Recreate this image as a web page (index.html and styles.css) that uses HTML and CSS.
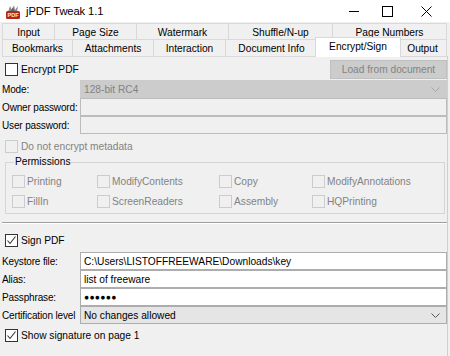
FILE: index.html
```html
<!DOCTYPE html>
<html>
<head>
<meta charset="utf-8">
<link rel="stylesheet" href="styles.css">
</head>
<body>
<div class="window">
  <div class="titlebar">
    <svg class="appicon" width="16" height="16" viewBox="0 0 16 16">
      <path d="M3 8 L5 2 L7 6 L9 1 L10 6 L13 2 L12 8 Z" fill="#8a8a8a"/>
      <path d="M6 7 L8 3 L9 7 Z" fill="#5a5a5a"/>
      <rect x="1" y="7" width="14" height="8" rx="1.5" fill="#b3261e"/>
      <text x="8" y="13.4" font-size="5.6" font-family="Liberation Sans, sans-serif" font-weight="bold" fill="#ffe9d0" text-anchor="middle">PDF</text>
    </svg>
    <span class="title">jPDF Tweak 1.1</span>
    <div class="controls">
      <svg class="ctl" width="46" height="22" viewBox="0 0 46 22"><path d="M18 11.5 H28" stroke="#000" stroke-width="1"/></svg>
      <svg class="ctl" width="46" height="22" viewBox="0 0 46 22"><rect x="18.5" y="6.5" width="10" height="10" fill="none" stroke="#000" stroke-width="1"/></svg>
      <svg class="ctl" width="46" height="22" viewBox="0 0 46 22"><path d="M17.5 6.5 L27.5 16.5 M27.5 6.5 L17.5 16.5" stroke="#000" stroke-width="1"/></svg>
    </div>
  </div>

  <div class="tabs">
    <div class="tabrow row1">
      <div class="tab">Input</div>
      <div class="tab">Page Size</div>
      <div class="tab">Watermark</div>
      <div class="tab">Shuffle/N-up</div>
      <div class="tab last">Page Numbers</div>
    </div>
    <div class="tabrow row2">
      <div class="tab">Bookmarks</div>
      <div class="tab">Attachments</div>
      <div class="tab">Interaction</div>
      <div class="tab">Document Info</div>
      <div class="tab selected">Encrypt/Sign</div>
      <div class="tab last">Output</div>
    </div>
  </div>

  <div class="panel">
    <div class="toprow">
      <label class="check"><span class="box"></span>Encrypt PDF</label>
      <div class="button disabled">Load from document</div>
    </div>

    <div class="form enc">
      <div class="lbl">Mode:</div>
      <div class="combo disabled"><span>128-bit RC4</span><svg class="chev" width="9" height="5" viewBox="0 0 9 5"><path d="M0.5 0.5 L4.5 4.5 L8.5 0.5" fill="none" stroke="#a8a8a8"/></svg></div>
      <div class="lbl">Owner password:</div>
      <div class="field disabled"></div>
      <div class="lbl">User password:</div>
      <div class="field disabled"></div>
    </div>

    <label class="check disabled meta"><span class="box"></span>Do not encrypt metadata</label>

    <fieldset class="group">
      <legend>Permissions</legend>
      <div class="perms">
        <label class="check disabled"><span class="box"></span>Printing</label>
        <label class="check disabled"><span class="box"></span>ModifyContents</label>
        <label class="check disabled"><span class="box"></span>Copy</label>
        <label class="check disabled"><span class="box"></span>ModifyAnnotations</label>
        <label class="check disabled"><span class="box"></span>FillIn</label>
        <label class="check disabled"><span class="box"></span>ScreenReaders</label>
        <label class="check disabled"><span class="box"></span>Assembly</label>
        <label class="check disabled"><span class="box"></span>HQPrinting</label>
      </div>
    </fieldset>

    <div class="separator"></div>

    <label class="check sign"><span class="box checked"><svg width="11" height="11" viewBox="0 0 11 11"><path d="M1.5 5.5 L4 8.5 L9.5 1.5" fill="none" stroke="#333" stroke-width="1.1"/></svg></span>Sign PDF</label>

    <div class="form sig">
      <div class="lbl">Keystore file:</div>
      <div class="field"><span>C:\Users\LISTOFFREEWARE\Downloads\key</span></div>
      <div class="lbl">Alias:</div>
      <div class="field"><span>list of freeware</span></div>
      <div class="lbl">Passphrase:</div>
      <div class="field"><span class="dots">●●●●●●</span></div>
      <div class="lbl">Certification level</div>
      <div class="combo"><span>No changes allowed</span><svg class="chev" width="9" height="5" viewBox="0 0 9 5"><path d="M0.5 0.5 L4.5 4.5 L8.5 0.5" fill="none" stroke="#555"/></svg></div>
    </div>

    <label class="check showsig"><span class="box checked"><svg width="11" height="11" viewBox="0 0 11 11"><path d="M1.5 5.5 L4 8.5 L9.5 1.5" fill="none" stroke="#333" stroke-width="1.1"/></svg></span>Show signature on page 1</label>
  </div>
</div>
</body>
</html>
```

FILE: styles.css
```css
* { box-sizing: border-box; }

html, body {
  margin: 0;
  padding: 0;
  background: #f0f0f0;
}

body {
  width: 450px;
  height: 356px;
  overflow: hidden;
  font-family: "Liberation Sans", Arial, sans-serif;
  font-size: 10.2px;
  color: #000;
}

.window {
  width: 450px;
  height: 356px;
  display: flex;
  flex-direction: column;
}

/* title bar */
.titlebar {
  height: 22px;
  background: #fff;
  display: flex;
  align-items: center;
  flex-shrink: 0;
}
.appicon {
  margin-left: 5px;
  margin-top: 1px;
}
.title {
  margin-left: 5px;
  font-size: 11.2px;
  letter-spacing: -0.1px;
}
.controls {
  margin-left: auto;
  display: flex;
  margin-right: 0;
}
.ctl { display: block; }
.controls .ctl:first-child { margin-right: -13px; }
.controls .ctl:nth-child(2) { margin-right: -6px; }

/* tabs */
.tabs {
  margin-top: 1px;
  padding: 0 3px 0 2px;
  flex-shrink: 0;
}
.tabrow {
  display: grid;
}
.row1 {
  grid-template-columns: 52px 82px 92px 104px 115px;
  height: 16px;
}
.row2 {
  grid-template-columns: 70px 81px 72px 92px 82px 48px;
  height: 17px;
}
.tab {
  border-left: 1px solid #d9d9d9;
  border-top: 1px solid #d9d9d9;
  background: #f0f0f0;
  display: flex;
  align-items: center;
  justify-content: center;
  white-space: nowrap;
  padding-top: 1px;
}
.tab.last { border-right: 1px solid #d9d9d9; }
.tab.selected {
  background: #fff;
  margin: -2px -2px -1px -2px;
  position: relative;
  z-index: 1;
  border-right: 1px solid #d9d9d9;
  padding-top: 0;
  padding-bottom: 2px;
}
.tab.selected + .tab { border-left: none; }

/* panel */
.panel {
  flex: 1;
  margin: 0 2px 0 2px;
  border-top: 1px solid #d9d9d9;
  border-right: 1px solid #cfcfcf;
  display: flex;
  flex-direction: column;
}

.toprow {
  margin-top: 3px;
  height: 19px;
  display: flex;
  align-items: center;
  justify-content: space-between;
}

.check {
  display: flex;
  align-items: center;
  white-space: nowrap;
  height: 20px;
}
.box {
  width: 13px;
  height: 13px;
  border: 1px solid #333;
  background: #fff;
  margin-left: 3px;
  margin-right: 3px;
  display: flex;
  align-items: center;
  justify-content: center;
  flex-shrink: 0;
}
.box svg { display: block; }
.check.disabled { color: #838383; }
.check.disabled .box {
  border-color: #cccccc;
  background: #f0f0f0;
}
.toprow .check { height: 19px; }

.button {
  width: 117px;
  height: 19px;
  display: flex;
  align-items: center;
  justify-content: center;
}
.button.disabled {
  background: #cccccc;
  border: 1px solid #bfbfbf;
  color: #838383;
}

/* forms */
.form {
  display: grid;
  grid-template-columns: 78px 367px;
  grid-auto-rows: 18px;
}
.form.enc { margin-top: 1px; }
.lbl {
  display: flex;
  align-items: center;
  padding-left: 0;
  white-space: nowrap;
  font-size: 10px;
  letter-spacing: -0.15px;
}
.field, .combo {
  display: flex;
  align-items: center;
  padding-left: 3px;
  padding-right: 6px;
  border: 1px solid #adadad;
  background: #fff;
  white-space: nowrap;
  overflow: hidden;
}
.field.disabled {
  background: #f0f0f0;
  border-color: #bcbcbc;
}
.combo {
  justify-content: space-between;
  background: #e5e5e5;
  border-color: #adadad;
}
.combo.disabled {
  background: #cccccc;
  border-color: #cccccc;
  color: #838383;
}
.dots {
  font-size: 8.5px;
  letter-spacing: 0.3px;
}

.meta { margin-top: 2px; }

/* group */
.group {
  margin: 0 2px 0 3px;
  padding: 3px 0 2px 6px;
  border: 1px solid #d5d5d5;
  min-width: 0;
}
.group legend {
  padding: 0 1px;
  margin-left: 2px;
  line-height: 12px;
  height: 12px;
}
.perms {
  display: grid;
  grid-template-columns: 85px 122px 93px 1fr;
  grid-auto-rows: 20px;
}
.perms .box { margin-left: 0; margin-right: 2px; }

.separator {
  margin-top: 8px;
  border-top: 1px solid #a0a0a0;
  border-bottom: 1px solid #fff;
  height: 2px;
}

.sign { margin-top: 6px; }
.form.sig { margin-top: 2px; }
.showsig { margin-top: 1px; }
```
